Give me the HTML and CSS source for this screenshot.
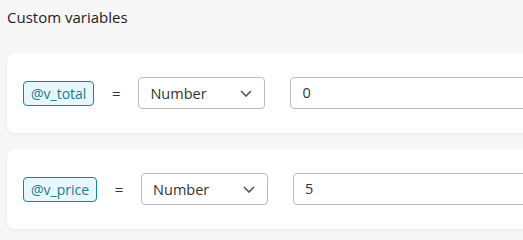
FILE: index.html
```html
<!DOCTYPE html>
<html lang="en">

<head>
    <meta charset="UTF-8">
    <title>Custom variables</title>
    <link rel="stylesheet" href="styles.css">
</head>

<body>
    <div class="page">
        <div class="content">
            <h2 class="title">Custom variables</h2>
            <div class="card">
                <span class="var">@v_total</span>
                <span class="eq">=</span>
                <div class="select">
                    <span>Number</span>
                    <svg width="12" height="7" viewBox="0 0 12 7"><path d="M1 1l5 5 5-5" fill="none" stroke="#555" stroke-width="1.6"/></svg>
                </div>
                <div class="input">0</div>
            </div>
            <div class="card">
                <span class="var">@v_price</span>
                <span class="eq">=</span>
                <div class="select">
                    <span>Number</span>
                    <svg width="12" height="7" viewBox="0 0 12 7"><path d="M1 1l5 5 5-5" fill="none" stroke="#555" stroke-width="1.6"/></svg>
                </div>
                <div class="input">5</div>
            </div>
        </div>
    </div>
</body>

</html>
```
FILE: styles.css
```css
* {
    margin: 0;
    padding: 0;
    box-sizing: border-box;
}

body {
    margin: 0;
    background: #f7f7f7;
    font-family: "Open Sans", "Noto Sans", sans-serif;
    color: #333;
}

/* the screenshot cuts the cards off on the right */
.page {
    width: 100%;
    overflow: hidden;
}

.content {
    padding: 7px 0 0 7px;
    width: 560px;
}

.title {
    font-size: 15px;
    font-weight: 400;
    color: #222;
    line-height: 20px;
    margin-bottom: 26px;
}

.card {
    background: #fff;
    border-radius: 8px;
    box-shadow: 0 1px 3px rgba(0, 0, 0, 0.06);
    height: 80px;
    margin-bottom: 16px;
    display: flex;
    align-items: center;
    padding-left: 16px;
}

.var {
    border: 1px solid #1b8393;
    background: #e8f7fb;
    color: #1b7a8a;
    border-radius: 4px;
    font-size: 14px;
    height: 25px;
    line-height: 23px;
    padding: 0 7px;
}

.eq {
    width: 44px;
    text-align: center;
    font-size: 15px;
}

.select {
    width: 127px;
    height: 32px;
    border: 1px solid #bbb;
    border-radius: 4px;
    display: flex;
    align-items: center;
    justify-content: space-between;
    padding: 0 12px 0 11px;
    font-size: 14.5px;
}

.input {
    margin-left: 25px;
    flex: 1;
    height: 32px;
    border: 1px solid #bbb;
    border-radius: 4px;
    padding-left: 11px;
    line-height: 30px;
    font-size: 14.5px;
}
```
